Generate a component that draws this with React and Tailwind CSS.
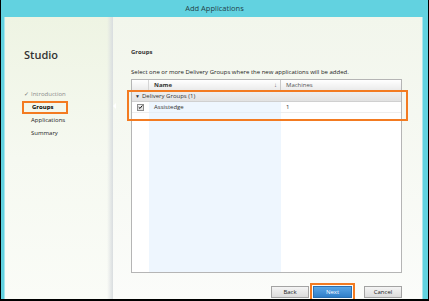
import React from "react";

export default function App() {
  const f = { fontFamily: '"Open Sans", "Noto Sans", sans-serif' };
  return (
    <div
      className="w-[429px] h-[301px] bg-[#62d2e0] border-l border-r border-b-2 border-black flex flex-col overflow-hidden"
      style={f}
    >
      {/* Title bar */}
      <div className="h-[17px] flex items-center justify-center text-[7.5px] text-[#24434a] shrink-0">
        Add Applications
      </div>
      {/* Content */}
      <div className="flex-1 ml-[3px] mr-[5px] border-l border-r border-[#a9e5ed] flex bg-gradient-to-b from-[#eef4e3] via-[#f6f9f1] to-[#fafcf7]">
        {/* Sidebar */}
        <div className="w-[102px] shrink-0 pl-[19px] pt-[31px] flex flex-col">
          <div className="text-[11px] font-semibold text-[#333] leading-[14px]">Studio</div>
          <div className="mt-[26px] flex flex-col text-[6px] leading-[13px]">
            <div className="text-[#8a8a8a] flex items-center">
              <span className="w-[7px] text-[#777]">✓</span>Introduction
            </div>
            <div className="flex">
              <span className="border-2 border-[#f37b21] -ml-[2px] pl-[8px] pr-[12px] leading-[7px] py-[1px] font-bold text-black">
                Groups
              </span>
            </div>
            <div className="pl-[7px] text-[#222]">Applications</div>
            <div className="pl-[7px] text-[#222]">Summary</div>
          </div>
        </div>
        {/* Shadow */}
        <div className="w-[6px] shrink-0 bg-gradient-to-r from-transparent to-[#d9dde0]" />
        {/* Right panel */}
        <div className="flex-1 relative pl-[18px] pr-[20px] pt-[31px] flex flex-col bg-gradient-to-b from-[#f2f6ec] to-[#fbfcfa]">
          <div className="absolute left-0 top-[86px] w-0 h-0 border-y-[3px] border-y-transparent border-r-[3px] border-r-white" />
          <div className="text-[6px] font-bold text-[#333] leading-[8px]">Groups</div>
          <div className="mt-[12px] text-[6px] text-[#222] leading-[8px]">
            Select one or more Delivery Groups where the new applications will be added.
          </div>
          {/* Table */}
          <div className="mt-[3px] h-[194px] border border-[#b5b5b5] bg-white relative flex flex-col text-[6px] leading-[10px] text-[#333]">
            <div className="h-[11px] flex bg-gradient-to-b from-white to-[#ebebeb] border-b border-[#c9c9c9]">
              <div className="w-[17px] border-r border-[#d5d5d5]" />
              <div className="w-[132px] border-r border-[#c9c9c9] flex items-center justify-between pl-[5px] pr-[3px] font-bold">
                <span>Name</span>
                <span className="font-normal text-[#666]">↓</span>
              </div>
              <div className="flex-1 pl-[5px] flex items-center text-[#555]">Machines</div>
            </div>
            <div className="h-[11px] flex items-center bg-gradient-to-b from-[#f0f0f0] to-[#e2e2e2] border-b border-[#d0d0d0] pl-[3px]">
              <span className="text-[5px] mr-[2px]">▼</span>
              <span>Delivery Groups (1)</span>
            </div>
            <div className="flex-1 flex">
              <div className="w-[17px] flex flex-col">
                <div className="h-[11px] border-b border-[#eeeeee] flex items-center justify-center">
                  <div className="w-[7px] h-[7px] border border-[#8c8c8c] bg-gradient-to-b from-[#f4f4f4] to-[#dcdcdc] flex items-center justify-center">
                    <svg width="6" height="6" viewBox="0 0 6 6">
                      <path d="M0.8 3.2 L2.4 4.7 L5.3 1.2" stroke="#111" strokeWidth="1.2" fill="none" />
                    </svg>
                  </div>
                </div>
              </div>
              <div className="w-[132px] bg-[#eef6fe] flex flex-col">
                <div className="h-[11px] border-b border-[#e6eef6] pl-[5px] flex items-center">Assistedge</div>
              </div>
              <div className="flex-1 flex flex-col">
                <div className="h-[11px] border-b border-[#eeeeee] pl-[5px] flex items-center">1</div>
              </div>
            </div>
            <div className="absolute left-[-5px] right-[-7px] top-[10px] h-[31px] border-2 border-[#f37b21]" />
          </div>
          {/* Buttons */}
          <div className="mt-[13px] flex justify-end text-[6px]">
            <button className="w-[38px] h-[12px] border border-[#a3a3a3] bg-gradient-to-b from-[#f4f4f4] to-[#dcdcdc] text-[#222] leading-[10px]">
              Back
            </button>
            <button className="ml-[4px] w-[39px] h-[12px] border border-[#2b6fb0] bg-gradient-to-b from-[#5aa5e5] to-[#2f7fc9] text-white leading-[10px] outline-2 outline-[#f37b21] outline-offset-[1px]">
              Next
            </button>
            <button className="ml-[12px] w-[38px] h-[12px] border border-[#a3a3a3] bg-gradient-to-b from-[#f4f4f4] to-[#dcdcdc] text-[#222] leading-[10px]">
              Cancel
            </button>
          </div>
        </div>
      </div>
    </div>
  );
}
